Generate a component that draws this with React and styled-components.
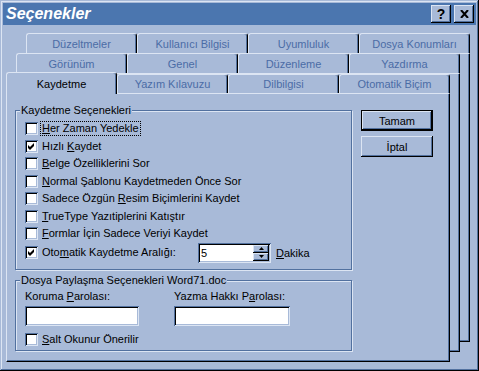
import React from "react";
import styled, { createGlobalStyle } from "styled-components";

const face = "#a8bad8";
const light = "#dce5f3";
const dark = "#52719f";
const titleBlue = "#4b76af";
const tabInk = "#4b6ca6";

const GlobalStyle = createGlobalStyle`
  html, body {
    margin: 0;
    padding: 0;
    background: ${face};
  }
  body {
    font-family: "Liberation Sans", Arial, sans-serif;
    font-size: 11px;
    color: #000;
  }
`;

const Window = styled.div`
  width: 479px;
  height: 371px;
  box-sizing: border-box;
  padding: 3px;
  background: ${face};
  display: flex;
  flex-direction: column;
  box-shadow: inset -1px -1px 0 #000, inset 1px 1px 0 ${face},
    inset -2px -2px 0 ${dark}, inset 2px 2px 0 ${light};
`;

const TitleBar = styled.div`
  height: 22px;
  background: ${titleBlue};
  display: flex;
  align-items: center;
  gap: 3px;
  padding: 0 2px 0 3px;
`;

const TitleText = styled.div`
  flex: 1;
  color: #fff;
  font: italic bold 16px "Liberation Sans", Arial, sans-serif;
`;

const TitleButton = styled.div`
  width: 20px;
  height: 18px;
  box-sizing: border-box;
  background: ${face};
  display: flex;
  align-items: center;
  justify-content: center;
  font: bold 14px "Liberation Sans", Arial, sans-serif;
  box-shadow: inset -1px -1px 0 #000, inset 1px 1px 0 ${light},
    inset -2px -2px 0 ${dark};
`;

const Stack = styled.div`
  flex: 1;
  display: grid;
  grid-template: 1fr / 1fr;
  margin: 8px 6px 6px 3px;
`;

const Sheet = styled.div`
  grid-area: 1 / 1;
  display: flex;
  flex-direction: column;
  margin: ${(p) => p.$m};
`;

const TabRow = styled.div`
  display: flex;
  align-items: flex-end;
  height: ${(p) => (p.$front ? 21 : 20)}px;
`;

const Tab = styled.div`
  flex: 1;
  height: ${(p) => (p.$active ? 22 : p.$front ? 19 : 20)}px;
  margin-bottom: ${(p) => (p.$active ? -1 : 0)}px;
  position: ${(p) => (p.$active ? "relative" : "static")};
  z-index: ${(p) => (p.$active ? 1 : 0)};
  box-sizing: border-box;
  background: ${face};
  border-top: 1px solid ${light};
  border-left: 1px solid ${light};
  border-right: 1px solid #000;
  border-radius: 3px 3px 0 0;
  box-shadow: inset -1px 0 0 ${dark};
  color: ${(p) => (p.$active ? "#000" : tabInk)};
  text-align: center;
  line-height: 13px;
  padding-top: ${(p) => (p.$active ? 5 : p.$front ? 3 : 4)}px;
  white-space: nowrap;
`;

const Panel = styled.div`
  flex: 1;
  background: ${face};
  border-top: 1px solid ${light};
  border-left: 1px solid ${light};
  border-right: 1px solid #000;
  border-bottom: 1px solid #000;
  box-shadow: inset -1px -1px 0 ${dark};
  display: flex;
  align-items: flex-start;
  padding: 10px 0 0 8px;
`;

const Column = styled.div`
  display: flex;
  flex-direction: column;
`;

const Group = styled.fieldset`
  margin: ${(p) => p.$top || 0}px 0 0 0;
  width: 337px;
  min-width: 0;
  box-sizing: border-box;
  border: 1px solid ${dark};
  box-shadow: 1px 1px 0 ${light}, inset 1px 1px 0 ${light};
  padding: 3px 0 ${(p) => p.$bottom}px 9px;
`;

const Legend = styled.legend`
  margin-left: -5px;
  padding: 0 1px;
  line-height: 13px;
  background: ${face};
`;

const Row = styled.div`
  display: flex;
  align-items: center;
  height: ${(p) => p.$h || 17.5}px;
  margin-top: ${(p) => p.$top || 0}px;
`;

const Box = styled.div`
  width: 13px;
  height: 13px;
  flex: none;
  box-sizing: border-box;
  background: #fff;
  box-shadow: inset 1px 1px 0 ${dark}, inset -1px -1px 0 ${light},
    inset 2px 2px 0 #000, inset -2px -2px 0 ${face};
  display: flex;
  align-items: center;
  justify-content: center;
`;

const Label = styled.span`
  margin-left: 2px;
  padding: 0 1px;
  border: 1px ${(p) => (p.$focus ? "dotted #000" : "solid transparent")};
  line-height: 13px;
  white-space: nowrap;
  width: ${(p) => p.$w || "auto"};
  flex: none;
`;

const Spinner = styled.div`
  width: 73px;
  height: 20px;
  box-sizing: border-box;
  background: #fff;
  padding: 2px;
  display: flex;
  box-shadow: inset 1px 1px 0 ${dark}, inset -1px -1px 0 ${light},
    inset 2px 2px 0 #000, inset -2px -2px 0 ${face};
`;

const SpinValue = styled.div`
  flex: 1;
  padding-left: 1px;
  line-height: 16px;
`;

const SpinButtons = styled.div`
  width: 16px;
  display: flex;
  flex-direction: column;
`;

const SpinHalf = styled.div`
  flex: 1;
  background: ${face};
  display: flex;
  align-items: center;
  justify-content: center;
  box-shadow: inset -1px -1px 0 #000, inset 1px 1px 0 ${light},
    inset -2px -2px 0 ${dark};
`;

const Unit = styled.span`
  margin-left: 5px;
`;

const Fields = styled.div`
  display: grid;
  grid-template-columns: 114px 116px;
  column-gap: 35px;
`;

const FieldLabel = styled.div`
  line-height: 13px;
  margin-bottom: 3px;
  white-space: nowrap;
`;

const TextInput = styled.div`
  height: 20px;
  background: #fff;
  box-shadow: inset 1px 1px 0 ${dark}, inset -1px -1px 0 ${light},
    inset 2px 2px 0 #000, inset -2px -2px 0 ${face};
`;

const Buttons = styled.div`
  display: flex;
  flex-direction: column;
  gap: 5px;
  margin: 6px 0 0 9px;
`;

const Button = styled.div`
  width: 72px;
  height: 21px;
  box-sizing: border-box;
  border: ${(p) => (p.$default ? "1px solid #000" : "none")};
  background: ${face};
  display: flex;
  align-items: center;
  justify-content: center;
  box-shadow: inset -1px -1px 0 #000, inset 1px 1px 0 ${light},
    inset -2px -2px 0 ${dark};
`;

const Check = () => (
  <svg width="9" height="9" viewBox="0 0 9 9">
    <path d="M1 3 L3 5 L7 1 L7 4 L3 8 L1 6 Z" fill="#000" />
  </svg>
);

const Arrow = ({ up }) => (
  <svg width="5" height="3" viewBox="0 0 5 3">
    <path d={up ? "M0 3 L2.5 0 L5 3 Z" : "M0 0 L2.5 3 L5 0 Z"} fill="#000" />
  </svg>
);

const CheckItem = ({ checked, focus, w, children }) => (
  <>
    <Box>{checked && <Check />}</Box>
    <Label $focus={focus} $w={w}>
      {children}
    </Label>
  </>
);

const rows = [
  ["Düzeltmeler", "Kullanıcı Bilgisi", "Uyumluluk", "Dosya Konumları"],
  ["Görünüm", "Genel", "Düzenleme", "Yazdırma"],
];

export default function App() {
  return (
    <>
      <GlobalStyle />
      <Window>
        <TitleBar>
          <TitleText>Seçenekler</TitleText>
          <TitleButton>?</TitleButton>
          <TitleButton>
            <svg width="9" height="8" viewBox="0 0 9 8">
              <path d="M1 0 L8 8 M8 0 L1 8" stroke="#000" strokeWidth="2" />
            </svg>
          </TitleButton>
        </TitleBar>
        <Stack>
          <Sheet $m="0 0 20px 20px">
            <TabRow>
              {rows[0].map((t) => (
                <Tab key={t}>{t}</Tab>
              ))}
            </TabRow>
            <Panel />
          </Sheet>
          <Sheet $m="20px 10px 10px 10px">
            <TabRow>
              {rows[1].map((t) => (
                <Tab key={t}>{t}</Tab>
              ))}
            </TabRow>
            <Panel />
          </Sheet>
          <Sheet $m="39px 20px 0 0">
            <TabRow $front>
              <Tab $front $active>
                Kaydetme
              </Tab>
              <Tab $front>Yazım Kılavuzu</Tab>
              <Tab $front>Dilbilgisi</Tab>
              <Tab $front>Otomatik Biçim</Tab>
            </TabRow>
            <Panel>
              <Column>
                <Group $bottom={6}>
                  <Legend>Kaydetme Seçenekleri</Legend>
                  <Row>
                    <CheckItem focus>
                      <u>H</u>er Zaman Yedekle
                    </CheckItem>
                  </Row>
                  <Row>
                    <CheckItem checked>
                      Hızlı <u>K</u>aydet
                    </CheckItem>
                  </Row>
                  <Row>
                    <CheckItem>
                      <u>B</u>elge Özelliklerini Sor
                    </CheckItem>
                  </Row>
                  <Row>
                    <CheckItem>
                      <u>N</u>ormal Şablonu Kaydetmeden Önce Sor
                    </CheckItem>
                  </Row>
                  <Row>
                    <CheckItem>
                      Sadece Özgün <u>R</u>esim Biçimlerini Kaydet
                    </CheckItem>
                  </Row>
                  <Row>
                    <CheckItem>
                      <u>T</u>rueType Yazıtiplerini Katıştır
                    </CheckItem>
                  </Row>
                  <Row>
                    <CheckItem>
                      <u>F</u>ormlar İçin Sadece Veriyi Kaydet
                    </CheckItem>
                  </Row>
                  <Row $h={20}>
                    <CheckItem checked w="154px">
                      Oto<u>m</u>atik Kaydetme Aralığı:
                    </CheckItem>
                    <Spinner>
                      <SpinValue>5</SpinValue>
                      <SpinButtons>
                        <SpinHalf>
                          <Arrow up />
                        </SpinHalf>
                        <SpinHalf>
                          <Arrow />
                        </SpinHalf>
                      </SpinButtons>
                    </Spinner>
                    <Unit>
                      <u>D</u>akika
                    </Unit>
                  </Row>
                </Group>
                <Group $top={4} $bottom={2}>
                  <Legend>Dosya Paylaşma Seçenekleri Word71.doc</Legend>
                  <Fields>
                    <div>
                      <FieldLabel>
                        Koruma <u>P</u>arolası:
                      </FieldLabel>
                      <TextInput />
                    </div>
                    <div>
                      <FieldLabel>
                        Yazma Hakkı P<u>a</u>rolası:
                      </FieldLabel>
                      <TextInput />
                    </div>
                  </Fields>
                  <Row $top={5}>
                    <CheckItem>
                      <u>S</u>alt Okunur Önerilir
                    </CheckItem>
                  </Row>
                </Group>
              </Column>
              <Buttons>
                <Button $default>Tamam</Button>
                <Button>İptal</Button>
              </Buttons>
            </Panel>
          </Sheet>
        </Stack>
      </Window>
    </>
  );
}
